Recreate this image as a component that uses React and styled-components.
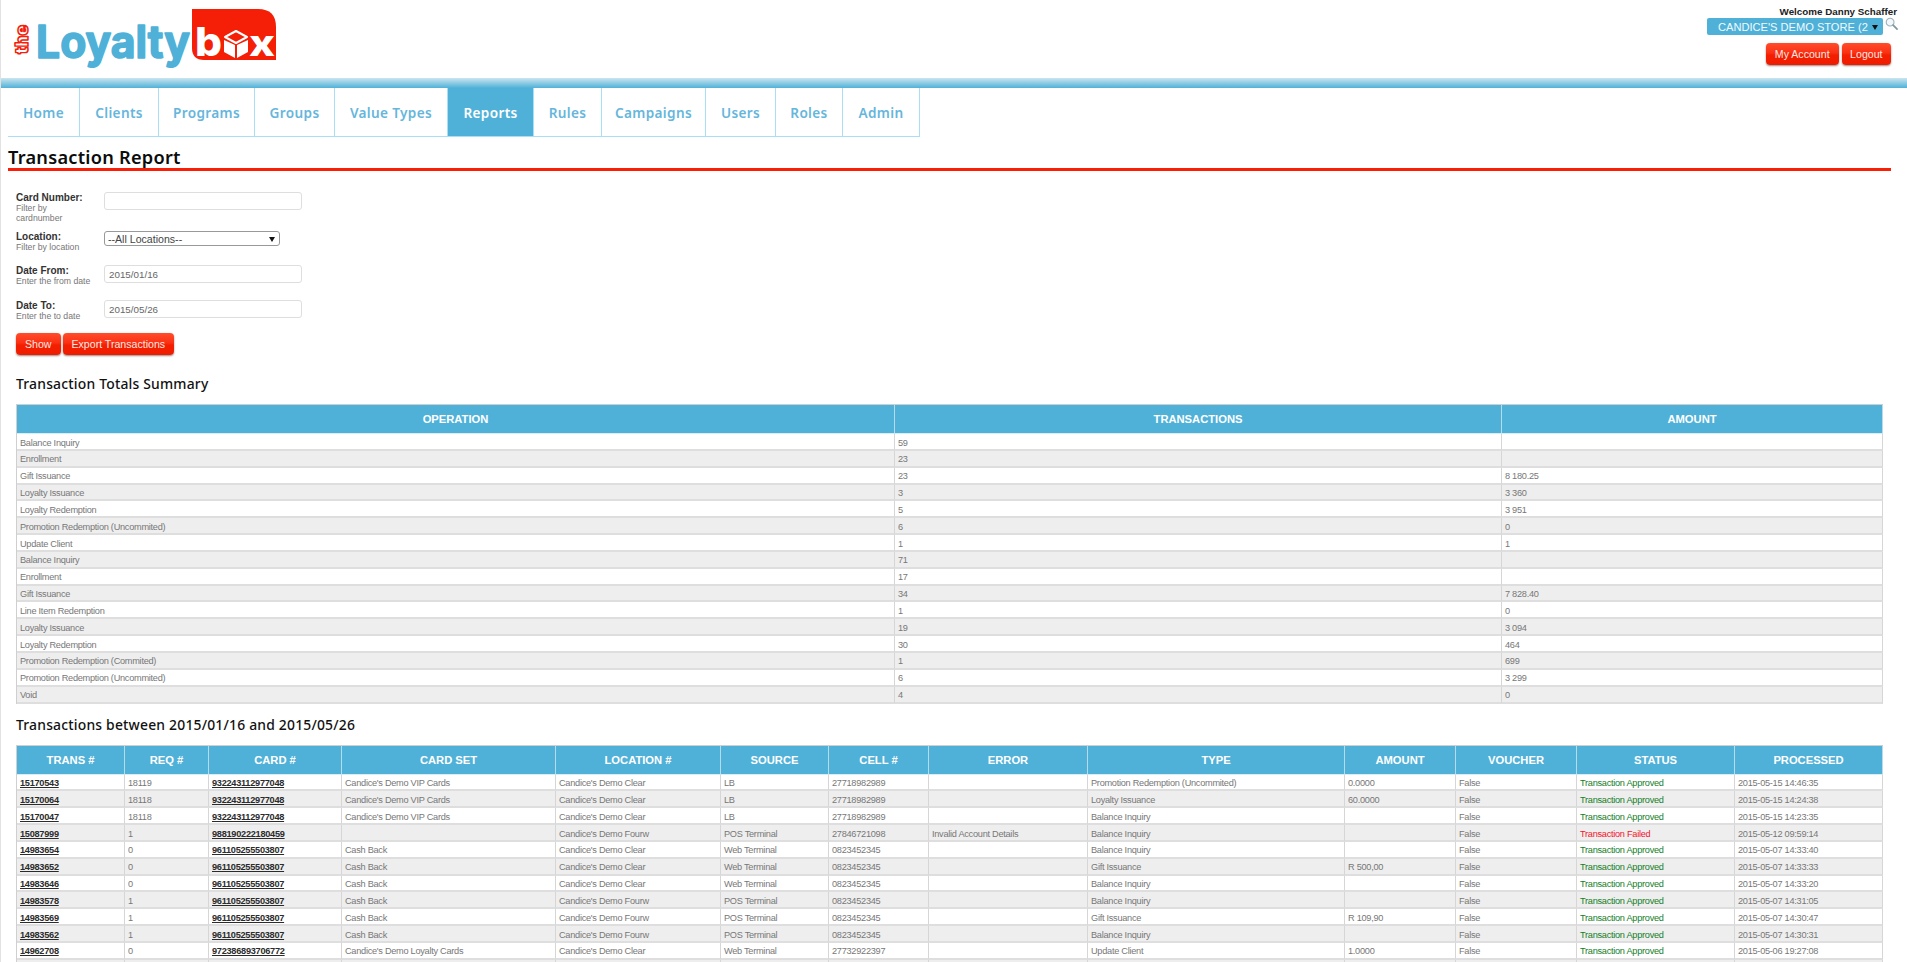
import React from 'react';
import styled, { createGlobalStyle } from 'styled-components';

const GlobalStyle = createGlobalStyle`
  html, body {
    margin: 0;
    padding: 0;
    background: #fff;
  }
  body {
    font-family: "Liberation Sans", Arial, sans-serif;
  }
`;

const Page = styled.div`
  height: 100vh;
  overflow: hidden;
  border-left: 1px solid #e2e2e2;
  box-sizing: border-box;
`;

const Header = styled.header`
  display: flex;
  justify-content: space-between;
  height: 78px;
`;

const LogoSvg = styled.svg`
  display: block;
  margin-left: -1px;
`;

const UserPanel = styled.div`
  display: flex;
  flex-direction: column;
  align-items: flex-end;
  padding: 6px 10px 0 0;
`;

const Welcome = styled.div`
  font-size: 9.8px;
  font-weight: bold;
  line-height: 12px;
  color: #222;
`;

const StoreRow = styled.div`
  display: flex;
  align-items: flex-start;
  gap: 2px;
  margin-right: -1px;
`;

const SelectWrap = styled.div`
  position: relative;
  align-self: start;
  &::after {
    content: '';
    position: absolute;
    right: 5px;
    top: 50%;
    margin-top: -2px;
    border-left: 3px solid transparent;
    border-right: 3px solid transparent;
    border-top: 5px solid #111;
    pointer-events: none;
  }
`;

const StoreSelect = styled.select`
  display: block;
  appearance: none;
  width: 176px;
  height: 17px;
  padding: 0 12px 0 11px;
  border: 0;
  border-radius: 2px;
  background: #4fb1d8;
  color: #f2fafd;
  font-family: "Liberation Sans", Arial, sans-serif;
  font-size: 11.1px;
`;

const SearchIcon = styled.svg`
  display: block;
  margin-top: -1px;
`;

const UserActions = styled.div`
  display: flex;
  gap: 3px;
  margin: 8px 6px 0 0;
`;

const RedButton = styled.button`
  height: 22px;
  padding: 0 ${(p) => p.$pad || 8}px;
  border: 0;
  border-radius: 4px;
  background: linear-gradient(to bottom, #ff4d2b 0%, #fb3014 45%, #f41f00 55%, #f01c00 100%);
  box-shadow: 0 1px 2px rgba(0, 0, 0, 0.45);
  color: #ffe9e2;
  font-family: "Liberation Sans", Arial, sans-serif;
  font-size: 10.6px;
`;

const Bar = styled.div`
  height: 10px;
  background: linear-gradient(to bottom, #cbe5ef 0%, #4fb1d8 100%);
`;

const Nav = styled.nav`
  display: grid;
  grid-template-columns: 71px 79px 96px 80px 113px 86px 68px 104px 70px 67px 77px;
  width: 911px;
  height: 49px;
  margin-left: 7px;
  border-left: 1px solid #a9dff5;
  box-sizing: border-box;
`;

const NavItem = styled.a`
  display: flex;
  align-items: center;
  justify-content: center;
  margin-left: ${(p) => (p.$first ? '-1px' : '0')};
  border-right: 1px solid #a9dff5;
  border-bottom: 1px solid #a9dff5;
  background: ${(p) => (p.$active ? '#4fb1d8' : '#fff')};
  color: ${(p) => (p.$active ? '#fff' : '#66b6dc')};
  font-family: "Noto Sans", sans-serif;
  font-size: 13.6px;
  font-weight: 600;
  letter-spacing: 0.35px;
  text-decoration: none;
`;

const TitleBlock = styled.div`
  height: 31px;
  margin: 0 16px 0 7px;
  border-bottom: 3px solid #fb1e06;
  box-sizing: content-box;
`;

const Title = styled.h1`
  margin: 0;
  padding-top: 9px;
  color: #0c0c0c;
  font-family: "Noto Sans", sans-serif;
  font-size: 18.2px;
  font-weight: 600;
  letter-spacing: 0.25px;
  line-height: 22px;
`;

const FilterForm = styled.form`
  padding: 21px 0 8px 15px;
`;

const FormRow = styled.div`
  display: grid;
  grid-template-columns: 88px auto;
  justify-content: start;
  height: ${(p) => p.$height}px;
`;

const FieldLabel = styled.div`
  color: #333;
  font-size: 10px;
  font-weight: bold;
  line-height: 11px;
`;

const FieldHint = styled.div`
  color: #777;
  font-size: 8.7px;
  line-height: 10px;
  width: ${(p) => (p.$wrap ? '60px' : 'auto')};
  white-space: ${(p) => (p.$wrap ? 'normal' : 'nowrap')};
`;

const TextInput = styled.input`
  display: block;
  width: 198px;
  height: 18px;
  padding: 0 4px;
  border: 1px solid #dedede;
  border-radius: 3px;
  box-sizing: border-box;
  color: #666;
  font-family: "Liberation Sans", Arial, sans-serif;
  font-size: 9.8px;
`;

const LocationSelect = styled.select`
  display: block;
  appearance: none;
  width: 176px;
  height: 15px;
  padding: 0 3px;
  border: 1px solid #999;
  border-radius: 3px;
  box-sizing: border-box;
  background: #fff;
  color: #444;
  font-family: "Liberation Sans", Arial, sans-serif;
  font-size: 10.6px;
`;

const FormActions = styled.div`
  display: flex;
  gap: 2px;
`;

const SectionHeading = styled.h2`
  margin: 10px 0 10px 15px;
  color: #111;
  font-family: "Noto Sans", sans-serif;
  font-size: 13.9px;
  font-weight: 500;
  letter-spacing: 0.2px;
  line-height: 21px;
`;

const DataTable = styled.table`
  width: 1866px;
  margin-left: 15px;
  border-collapse: separate;
  border-spacing: 0;
  table-layout: fixed;
  border-top: 1px solid #cfcfcf;
  border-left: 1px solid #cfcfcf;
`;

const HeadCell = styled.th`
  height: 28px;
  padding: 0;
  background: #4fb1d8;
  border-right: 1px solid #b5dcec;
  border-bottom: 1px solid #d8eef6;
  color: #fff;
  font-size: 11.2px;
  font-weight: bold;
  text-align: center;
  text-transform: uppercase;
`;

const Row = styled.tr`
  background: ${(p) => (p.$alt ? '#eeeeee' : '#fff')};
`;

const Cell = styled.td`
  height: 16.85px;
  padding: 3.5px 3px 0;
  box-sizing: border-box;
  border-right: 1px solid #d6d6d6;
  border-bottom: 2px solid #dedede;
  color: ${(p) => p.$color || '#777'};
  font-size: 9.2px;
  letter-spacing: -0.27px;
  line-height: 11.3px;
  overflow: hidden;
  white-space: nowrap;
`;

const RecordLink = styled.a`
  color: #2b2b2b;
  font-weight: bold;
  text-decoration: underline;
`;

const navItems = ['Home', 'Clients', 'Programs', 'Groups', 'Value Types', 'Reports', 'Rules', 'Campaigns', 'Users', 'Roles', 'Admin'];

const totals = [
  ['Balance Inquiry', '59', ''],
  ['Enrollment', '23', ''],
  ['Gift Issuance', '23', '8 180.25'],
  ['Loyalty Issuance', '3', '3 360'],
  ['Loyalty Redemption', '5', '3 951'],
  ['Promotion Redemption (Uncommited)', '6', '0'],
  ['Update Client', '1', '1'],
  ['Balance Inquiry', '71', ''],
  ['Enrollment', '17', ''],
  ['Gift Issuance', '34', '7 828.40'],
  ['Line Item Redemption', '1', '0'],
  ['Loyalty Issuance', '19', '3 094'],
  ['Loyalty Redemption', '30', '464'],
  ['Promotion Redemption (Commited)', '1', '699'],
  ['Promotion Redemption (Uncommited)', '6', '3 299'],
  ['Void', '4', '0'],
];

const txColumns = [
  ['Trans #', 108], ['Req #', 84], ['Card #', 133], ['Card Set', 214], ['Location #', 165], ['Source', 108],
  ['Cell #', 100], ['Error', 159], ['Type', 257], ['Amount', 111], ['Voucher', 121], ['Status', 158], ['Processed', 148],
];

const VIP = "Candice's Demo VIP Cards";
const CLEAR = "Candice's Demo Clear";
const FOURW = "Candice's Demo Fourw";

const transactions = [
  ['15170543', '18119', '932243112977048', VIP, CLEAR, 'LB', '27718982989', '', 'Promotion Redemption (Uncommited)', '0.0000', 'Transaction Approved', '2015-05-15 14:46:35'],
  ['15170064', '18118', '932243112977048', VIP, CLEAR, 'LB', '27718982989', '', 'Loyalty Issuance', '60.0000', 'Transaction Approved', '2015-05-15 14:24:38'],
  ['15170047', '18118', '932243112977048', VIP, CLEAR, 'LB', '27718982989', '', 'Balance Inquiry', '', 'Transaction Approved', '2015-05-15 14:23:35'],
  ['15087999', '1', '988190222180459', '', FOURW, 'POS Terminal', '27846721098', 'Invalid Account Details', 'Balance Inquiry', '', 'Transaction Failed', '2015-05-12 09:59:14'],
  ['14983654', '0', '961105255503807', 'Cash Back', CLEAR, 'Web Terminal', '0823452345', '', 'Balance Inquiry', '', 'Transaction Approved', '2015-05-07 14:33:40'],
  ['14983652', '0', '961105255503807', 'Cash Back', CLEAR, 'Web Terminal', '0823452345', '', 'Gift Issuance', 'R 500,00', 'Transaction Approved', '2015-05-07 14:33:33'],
  ['14983646', '0', '961105255503807', 'Cash Back', CLEAR, 'Web Terminal', '0823452345', '', 'Balance Inquiry', '', 'Transaction Approved', '2015-05-07 14:33:20'],
  ['14983578', '1', '961105255503807', 'Cash Back', FOURW, 'POS Terminal', '0823452345', '', 'Balance Inquiry', '', 'Transaction Approved', '2015-05-07 14:31:05'],
  ['14983569', '1', '961105255503807', 'Cash Back', FOURW, 'POS Terminal', '0823452345', '', 'Gift Issuance', 'R 109,90', 'Transaction Approved', '2015-05-07 14:30:47'],
  ['14983562', '1', '961105255503807', 'Cash Back', FOURW, 'POS Terminal', '0823452345', '', 'Balance Inquiry', '', 'Transaction Approved', '2015-05-07 14:30:31'],
  ['14962708', '0', '972386893706772', "Candice's Demo Loyalty Cards", CLEAR, 'Web Terminal', '27732922397', '', 'Update Client', '1.0000', 'Transaction Approved', '2015-05-06 19:27:08'],
  ['', '', '', '', '', '', '', '', '', '', '', ''],
];

const Logo = () => (
  <LogoSvg width="290" height="78" viewBox="0 0 290 78">
    <text x="-54" y="28" transform="rotate(-90)" fontFamily="Inter, sans-serif" fontWeight="900" fontSize="18" fill="#fff" stroke="#f4200a" strokeWidth="1.5" strokeLinejoin="round" textLength="29" lengthAdjust="spacingAndGlyphs">the</text>
    <text x="36" y="58" fontFamily="Inter, sans-serif" fontWeight="700" fontSize="45" fill="#4fb1d8" stroke="#4fb1d8" strokeWidth="1.6" strokeLinejoin="round" textLength="154" lengthAdjust="spacingAndGlyphs">Loyalty</text>
    <path d="M192 9 H258 Q276 9 276 27 V60 H204 Q192 60 192 48 Z" fill="#f41f06" />
    <text x="195" y="56" fontFamily="Inter, sans-serif" fontWeight="800" fontSize="40" fill="#fff" textLength="27" lengthAdjust="spacingAndGlyphs">b</text>
    <path d="M236 31 L247 37 L236 43 L225 37 Z" fill="none" stroke="#fff" strokeWidth="2" strokeLinejoin="round" />
    <path d="M224 40 L235 45 V58 L224 52 Z M237 45 L248 40 V52 L237 58 Z" fill="#fff" />
    <text x="249" y="56" fontFamily="Inter, sans-serif" fontWeight="800" fontSize="36" fill="#fff" textLength="26" lengthAdjust="spacingAndGlyphs">x</text>
  </LogoSvg>
);

const Magnifier = () => (
  <SearchIcon width="13" height="14" viewBox="0 0 14 15">
    <circle cx="5.5" cy="5.5" r="4.2" fill="#f4f8fa" stroke="#9db2bd" strokeWidth="1.2" />
    <path d="M8.8 8.8 L13 13" stroke="#7f95a1" strokeWidth="1.8" strokeLinecap="round" />
  </SearchIcon>
);

const Field = ({ height, label, hint, wrap, children }) => (
  <FormRow $height={height}>
    <div>
      <FieldLabel>{label}</FieldLabel>
      <FieldHint $wrap={wrap}>{hint}</FieldHint>
    </div>
    {children}
  </FormRow>
);

const statusColor = (status) => (status === 'Transaction Failed' ? '#f5122d' : status ? '#13801f' : undefined);

const App = () => (
  <Page>
    <GlobalStyle />
    <Header>
      <Logo />
      <UserPanel>
        <Welcome>Welcome Danny Schaffer</Welcome>
        <StoreRow>
          <SelectWrap>
            <StoreSelect defaultValue="store">
              <option value="store">CANDICE'S DEMO STORE (2</option>
            </StoreSelect>
          </SelectWrap>
          <Magnifier />
        </StoreRow>
        <UserActions>
          <RedButton $pad={9}>My Account</RedButton>
          <RedButton $pad={8.5}>Logout</RedButton>
        </UserActions>
      </UserPanel>
    </Header>
    <Bar />
    <Nav>
      {navItems.map((item, i) => (
        <NavItem key={item} href="#" $first={i === 0} $active={item === 'Reports'}>{item}</NavItem>
      ))}
    </Nav>
    <TitleBlock>
      <Title>Transaction Report</Title>
    </TitleBlock>
    <FilterForm>
      <Field height={39} label="Card Number:" hint="Filter by cardnumber" wrap>
        <TextInput />
      </Field>
      <Field height={34} label="Location:" hint="Filter by location">
        <SelectWrap>
          <LocationSelect defaultValue="all">
            <option value="all">--All Locations--</option>
          </LocationSelect>
        </SelectWrap>
      </Field>
      <Field height={35} label="Date From:" hint="Enter the from date">
        <TextInput defaultValue="2015/01/16" />
      </Field>
      <Field height={33} label="Date To:" hint="Enter the to date">
        <TextInput defaultValue="2015/05/26" />
      </Field>
      <FormActions>
        <RedButton $pad={9} type="button">Show</RedButton>
        <RedButton $pad={9} type="button">Export Transactions</RedButton>
      </FormActions>
    </FilterForm>

    <SectionHeading>Transaction Totals Summary</SectionHeading>
    <DataTable>
      <colgroup>
        <col width="878" />
        <col width="607" />
        <col width="381" />
      </colgroup>
      <thead>
        <tr>
          <HeadCell>Operation</HeadCell>
          <HeadCell>Transactions</HeadCell>
          <HeadCell>Amount</HeadCell>
        </tr>
      </thead>
      <tbody>
        {totals.map((row, i) => (
          <Row key={i} $alt={i % 2 === 1}>
            {row.map((value, j) => <Cell key={j}>{value}</Cell>)}
          </Row>
        ))}
      </tbody>
    </DataTable>

    <SectionHeading>Transactions between 2015/01/16 and 2015/05/26</SectionHeading>
    <DataTable>
      <colgroup>
        {txColumns.map(([name, width]) => <col key={name} width={width} />)}
      </colgroup>
      <thead>
        <tr>
          {txColumns.map(([name]) => <HeadCell key={name}>{name}</HeadCell>)}
        </tr>
      </thead>
      <tbody>
        {transactions.map((t, i) => (
          <Row key={i} $alt={i % 2 === 1}>
            <Cell><RecordLink href="#">{t[0]}</RecordLink></Cell>
            <Cell>{t[1]}</Cell>
            <Cell><RecordLink href="#">{t[2]}</RecordLink></Cell>
            <Cell>{t[3]}</Cell>
            <Cell>{t[4]}</Cell>
            <Cell>{t[5]}</Cell>
            <Cell>{t[6]}</Cell>
            <Cell>{t[7]}</Cell>
            <Cell>{t[8]}</Cell>
            <Cell>{t[9]}</Cell>
            <Cell>{t[0] && 'False'}</Cell>
            <Cell $color={statusColor(t[10])}>{t[10]}</Cell>
            <Cell>{t[11]}</Cell>
          </Row>
        ))}
      </tbody>
    </DataTable>
  </Page>
);

export default App;
